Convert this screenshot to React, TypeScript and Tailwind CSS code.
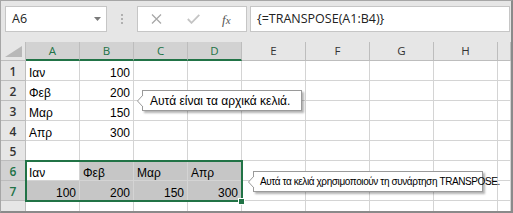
import React from "react";

function Callout({
  left,
  top,
  width,
  text,
  small,
}: {
  left: number;
  top: number;
  width: number;
  text: string;
  small?: boolean;
}) {
  return (
    <div
      className="absolute h-[21px] bg-white border border-[#9a9a9a] shadow-[2px_2px_2px_rgba(0,0,0,0.3)]"
      style={{ left, top, width }}
    >
      <span
        className={
          "absolute top-0 h-[19px] flex items-center whitespace-nowrap text-black font-['Liberation_Sans',sans-serif] " +
          (small ? "left-[6px] text-[10px] tracking-[-0.4px]" : "left-[7px] text-[12px]")
        }
      >
        {text}
      </span>
      <svg className="absolute left-[-6px] top-[4px]" width="7" height="12" viewBox="0 0 7 12">
        <polygon points="6,0 0.5,6 6,12" fill="white" />
        <polyline points="6,0 0.5,6 6,12" fill="none" stroke="#9a9a9a" strokeWidth="1" />
      </svg>
    </div>
  );
}

export default function App() {
  const cols = ["A", "B", "C", "D", "E", "F", "G", "H", ""];
  type Cell = { t?: string; right?: boolean };
  const rows: { n: string; cells: Cell[]; sel?: boolean }[] = [
    { n: "1", cells: [{ t: "Ιαν" }, { t: "100", right: true }] },
    { n: "2", cells: [{ t: "Φεβ" }, { t: "200", right: true }] },
    { n: "3", cells: [{ t: "Μαρ" }, { t: "150", right: true }] },
    { n: "4", cells: [{ t: "Απρ" }, { t: "300", right: true }] },
    { n: "5", cells: [] },
    { n: "6", sel: true, cells: [{ t: "Ιαν" }, { t: "Φεβ" }, { t: "Μαρ" }, { t: "Απρ" }] },
    {
      n: "7",
      sel: true,
      cells: [
        { t: "100", right: true },
        { t: "200", right: true },
        { t: "150", right: true },
        { t: "300", right: true },
      ],
    },
    { n: "8", cells: [] },
  ];

  return (
    <div className="relative w-[513px] h-[213px] overflow-hidden border-l border-t border-l-[#a6a6a6] border-t-[#a6a6a6] border-r-2 border-b-2 border-r-[#8a8a8a] border-b-[#8a8a8a] bg-[#e6e6e6] font-['Open_Sans',sans-serif]">
      {/* Toolbar */}
      <div className="h-[41px] flex items-start pt-[5px] pl-[4px]">
        <div className="w-[102px] h-[26px] bg-white border border-[#c6c6c6] flex items-center justify-between pl-[6px] pr-[5px]">
          <span className="text-[12.5px] text-[#222] leading-none">A6</span>
          <svg width="7" height="4" viewBox="0 0 7 4">
            <polygon points="0,0 7,0 3.5,4" fill="#7a7a7a" />
          </svg>
        </div>
        <div className="w-[30px] h-[26px] flex flex-col items-center justify-center gap-[2px]">
          <div className="w-[2px] h-[2px] bg-[#b0b0b0]" />
          <div className="w-[2px] h-[2px] bg-[#b0b0b0]" />
          <div className="w-[2px] h-[2px] bg-[#b0b0b0]" />
        </div>
        <div className="w-[110px] h-[26px] bg-white border border-[#c6c6c6] flex items-center">
          <svg className="ml-[13px]" width="11" height="10" viewBox="0 0 11 10">
            <path d="M1 0.5 L10 9.5 M10 0.5 L1 9.5" stroke="#a8a8a8" strokeWidth="1.3" fill="none" />
          </svg>
          <svg className="ml-[25px]" width="13" height="10" viewBox="0 0 13 10">
            <path d="M0.8 5 L4.5 8.8 L12.3 0.8" stroke="#c4c4c4" strokeWidth="1.8" fill="none" />
          </svg>
          <span className="ml-[22px] text-[13px] italic text-[#555] font-['Liberation_Serif',serif] leading-none">
            f<span className="text-[11px]">x</span>
          </span>
        </div>
        <div className="flex-1 ml-[3px] mr-[1px] h-[26px] bg-white border border-[#c6c6c6] flex items-center pl-[6px]">
          <span className="text-[12.5px] text-[#222] leading-none">{"{=TRANSPOSE(A1:B4)}"}</span>
        </div>
      </div>

      {/* Grid */}
      <div className="grid grid-cols-[25px_54px_54px_54px_54px_64px_64px_64px_64px_1fr] grid-rows-[19px_repeat(7,20px)_10px]">
        <div className="relative border-r border-b border-[#bdbdbd] bg-[#e6e6e6]">
          <svg className="absolute left-[4px] top-[4px]" width="17" height="11" viewBox="0 0 17 11">
            <polygon points="17,0 17,11 0,11" fill="#b8b8b8" />
          </svg>
        </div>
        {cols.map((c, i) => {
          const sel = i < 4;
          return (
            <div
              key={"h" + i}
              className={
                "flex items-center justify-center text-[11.5px] border-r " +
                (sel
                  ? "bg-[#d2d2d2] text-[#217346] border-r-[#bdbdbd] border-b-2 border-b-[#217346]"
                  : "bg-[#e6e6e6] text-[#333] border-r-[#bdbdbd] border-b border-b-[#bdbdbd]")
              }
            >
              {c}
            </div>
          );
        })}
        {rows.map((r, ri) => {
          const last = r.n === "8";
          return (
            <React.Fragment key={"r" + ri}>
              <div
                className={
                  "flex justify-center text-[12px] leading-[16px] border-r border-[#bdbdbd] font-semibold overflow-hidden " +
                  (last ? "items-start pt-[7px]" : "items-center pt-[2px] border-b") +
                  (r.sel ? " bg-[#d2d2d2] text-[#217346]" : " bg-[#e6e6e6] text-[#333]")
                }
              >
                {r.n}
              </div>
              {cols.map((_, ci) => {
                const cell = r.cells[ci];
                const inSel = r.sel && ci < 4;
                const active = r.n === "6" && ci === 0;
                const bg = inSel && !active ? "bg-[#c6c6c6]" : "bg-white";
                return (
                  <div
                    key={"c" + ri + "-" + ci}
                    className={
                      "flex items-end border-r border-[#d4d4d4] text-[12px] leading-[14px] text-black font-['Liberation_Sans',sans-serif] whitespace-nowrap " +
                      (last ? "" : "border-b ") +
                      bg +
                      (cell?.right ? " justify-end pr-[3px]" : " pl-[3px]")
                    }
                  >
                    {cell?.t ?? ""}
                  </div>
                );
              })}
            </React.Fragment>
          );
        })}
      </div>

      {/* Selection */}
      <div className="absolute left-[24px] top-[159px] w-[218px] h-[42px] border-2 border-[#217346]" />
      <div className="absolute left-[237px] top-[197px] w-[7px] h-[7px] bg-[#217346] border border-white" />

      {/* Callouts */}
      <Callout left={141} top={89} width={160} text="Αυτά είναι τα αρχικά κελιά." />
      <Callout
        left={252}
        top={170}
        width={230}
        small
        text="Αυτά τα κελιά χρησιμοποιούν τη συνάρτηση TRANSPOSE."
      />
    </div>
  );
}
